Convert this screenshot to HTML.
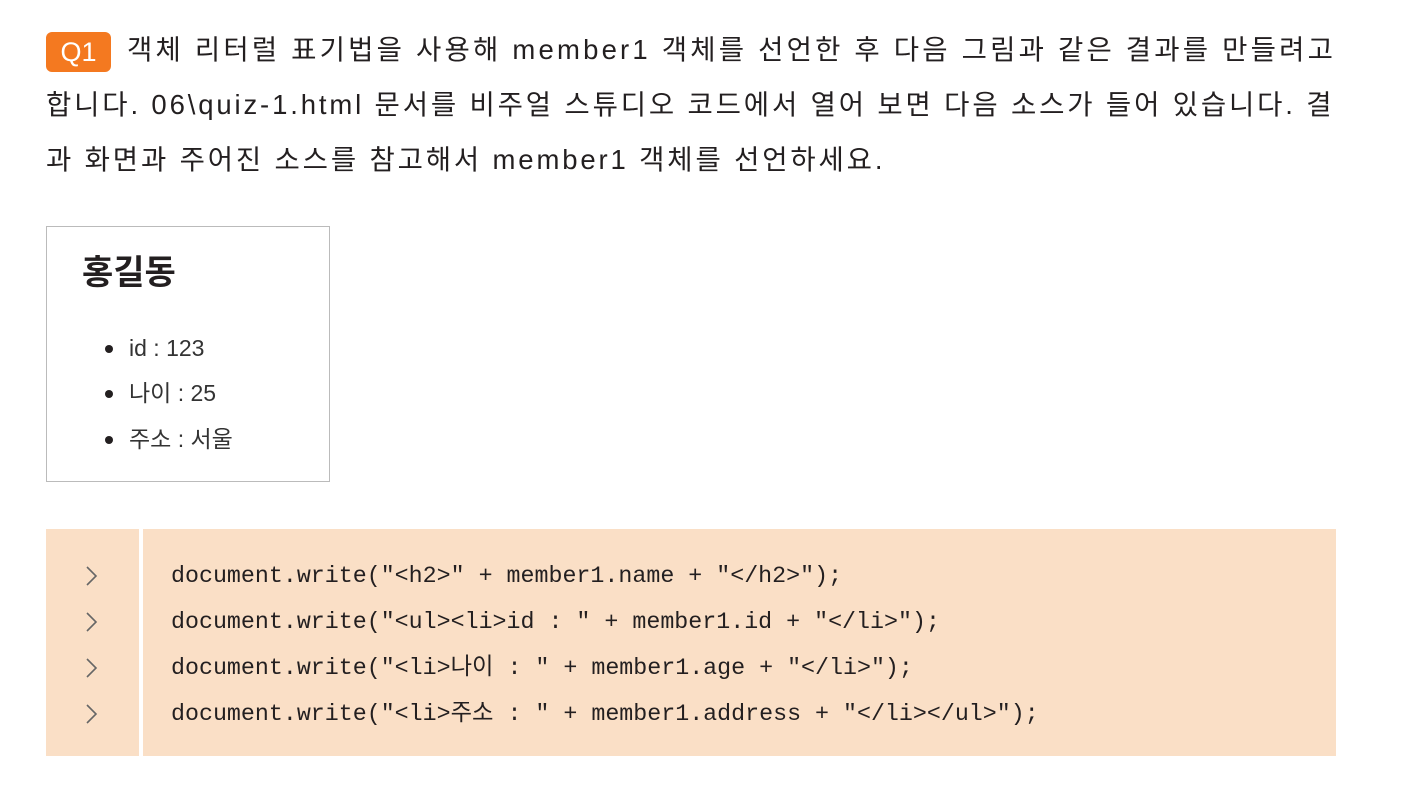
<!DOCTYPE html>
<html><head><meta charset="utf-8"><style>
body{margin:0;width:1420px;height:806px;background:#fff;position:relative;overflow:hidden;font-family:"Liberation Sans","Noto Sans CJK KR",sans-serif;color:#231f20}
.l{position:absolute;white-space:nowrap;font-size:27.5px;line-height:30px;letter-spacing:3px}
.badge{position:absolute;left:46px;top:32px;width:65px;height:40px;background:#f47920;border-radius:6px;color:#fff;font-size:27px;line-height:40px;text-align:center}
.box{position:absolute;left:46px;top:226px;width:282px;height:254px;border:1px solid #bbb}
.box h2{position:absolute;left:35px;top:24px;margin:0;font-size:34px;font-weight:bold;line-height:44px}
.li{position:absolute;left:82px;font-size:23px;color:#333;line-height:26px}
.li:before{content:"";position:absolute;left:-24px;top:10px;width:8px;height:8px;border-radius:50%;background:#231f20}
.code{position:absolute;left:46px;top:529px;width:1290px;height:227px;background:#fadfc6}
.div{position:absolute;left:93px;top:0;width:4px;height:227px;background:#fff}
.c{position:absolute;left:125px;font-family:"Liberation Mono","Noto Sans CJK KR",monospace;font-size:23.3px;line-height:30px;white-space:pre;color:#231f20}
.ar{position:absolute;left:38px;width:16px;height:24px}
</style></head><body>
<div class="badge">Q1</div>
<div class="l" style="left:127px;top:35px;letter-spacing:3.2px">객체 리터럴 표기법을 사용해 member1 객체를 선언한 후 다음 그림과 같은 결과를 만들려고</div>
<div class="l" style="left:46px;top:90px;letter-spacing:2.85px">합니다. 06\quiz-1.html 문서를 비주얼 스튜디오 코드에서 열어 보면 다음 소스가 들어 있습니다. 결</div>
<div class="l" style="left:46px;top:145px;letter-spacing:2.85px">과 화면과 주어진 소스를 참고해서 member1 객체를 선언하세요.</div>
<div class="box"><h2>홍길동</h2>
<div class="li" style="top:108px">id : 123</div>
<div class="li" style="top:153px">나이 : 25</div>
<div class="li" style="top:199px">주소 : 서울</div>
</div>
<div class="code"><div class="div"></div>
<svg class="ar" style="top:35px" viewBox="0 0 16 24"><path d="M3 3 L12 12 L3 21" fill="none" stroke="#666" stroke-width="1.6"/></svg>
<svg class="ar" style="top:81px" viewBox="0 0 16 24"><path d="M3 3 L12 12 L3 21" fill="none" stroke="#666" stroke-width="1.6"/></svg>
<svg class="ar" style="top:127px" viewBox="0 0 16 24"><path d="M3 3 L12 12 L3 21" fill="none" stroke="#666" stroke-width="1.6"/></svg>
<svg class="ar" style="top:173px" viewBox="0 0 16 24"><path d="M3 3 L12 12 L3 21" fill="none" stroke="#666" stroke-width="1.6"/></svg>
<div class="c" style="top:32px">document.write("&lt;h2&gt;" + member1.name + "&lt;/h2&gt;");</div>
<div class="c" style="top:78px">document.write("&lt;ul&gt;&lt;li&gt;id : " + member1.id + "&lt;/li&gt;");</div>
<div class="c" style="top:124px">document.write("&lt;li&gt;나이 : " + member1.age + "&lt;/li&gt;");</div>
<div class="c" style="top:170px">document.write("&lt;li&gt;주소 : " + member1.address + "&lt;/li&gt;&lt;/ul&gt;");</div>
</div>
</body></html>
